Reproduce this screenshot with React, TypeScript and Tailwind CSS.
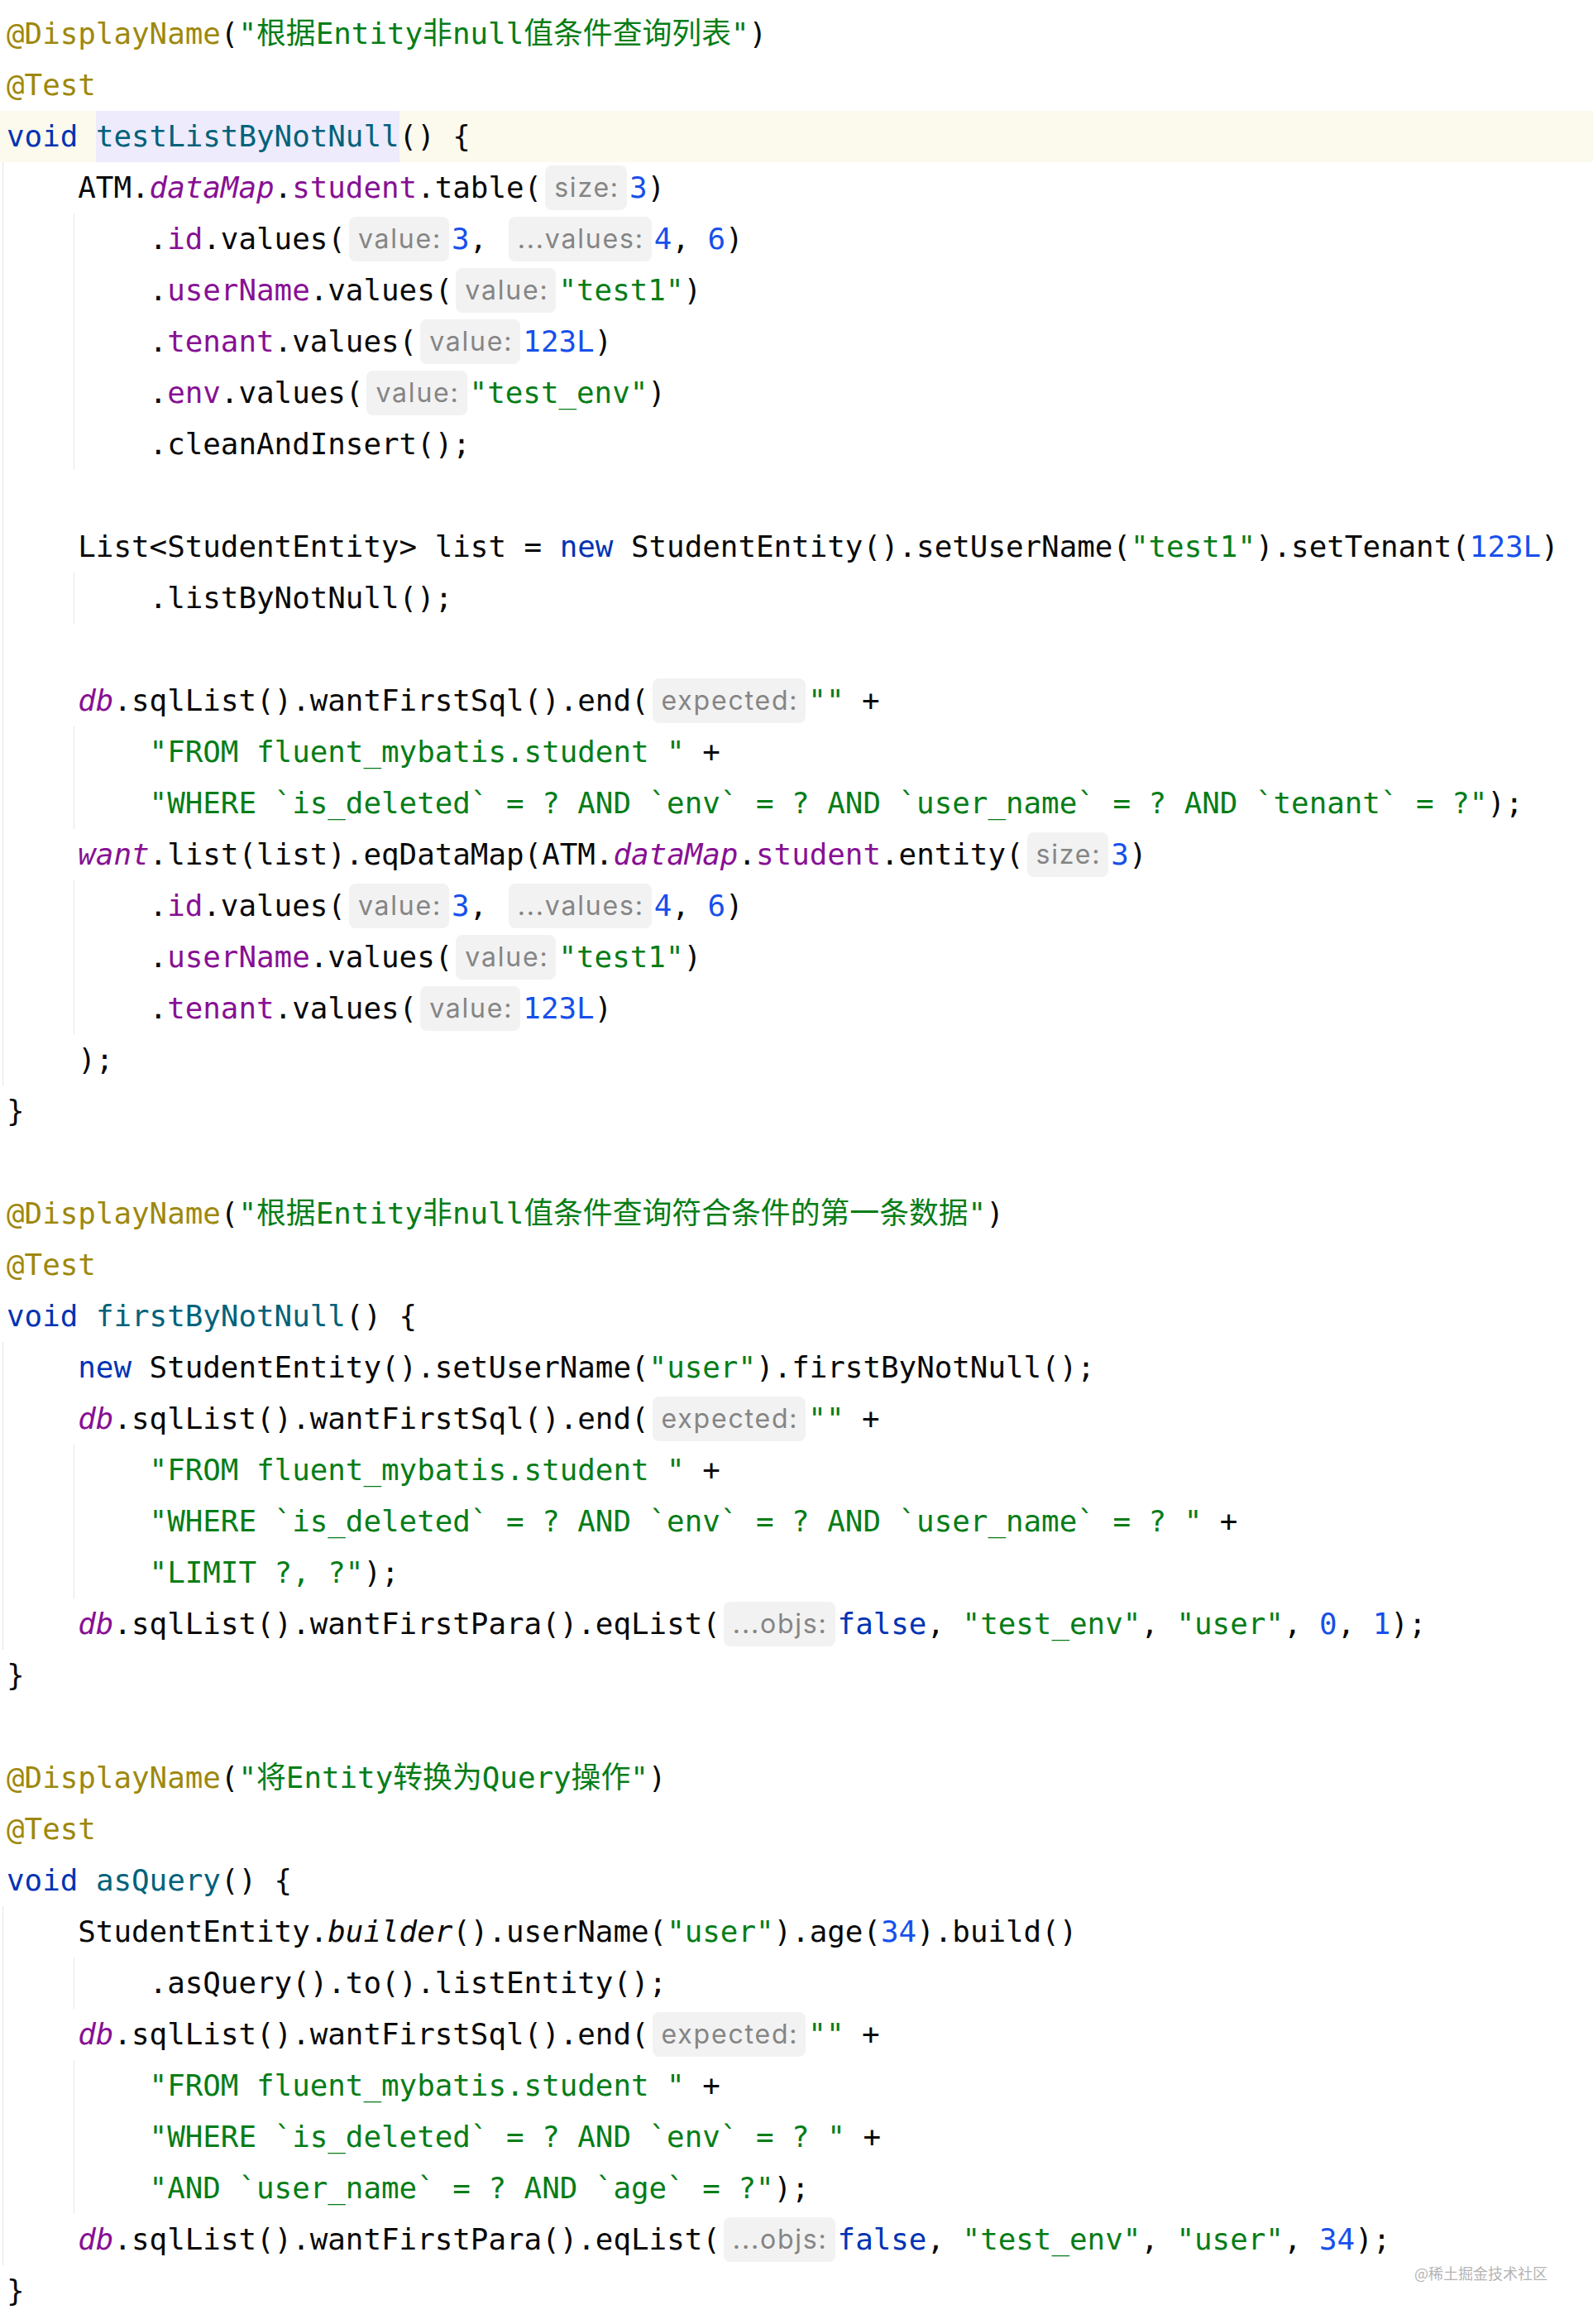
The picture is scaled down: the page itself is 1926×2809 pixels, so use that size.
import React from "react";

type Tok = [string, string];

const CLS: Record<string, string> = {
  t: "text-[#080808]",
  a: "text-[#9e880d]",
  s: "text-[#067d17]",
  k: "text-[#0033b3]",
  m: "text-[#00627a]",
  mh: "text-[#00627a] bg-[#edebfc] self-stretch flex items-center",
  f: "text-[#871094]",
  fi: "text-[#871094] italic",
  i: "text-[#080808] italic",
  n: "text-[#1750eb]",
};

const LINES: Tok[][] = [
  [["a", "@DisplayName"], ["t", "("], ["s", '"根据Entity非null值条件查询列表"'], ["t", ")"]],
  [["a", "@Test"]],
  [["k", "void"], ["t", " "], ["mh", "testListByNotNull"], ["t", "() {"]],
  [["t", "    ATM."], ["fi", "dataMap"], ["t", "."], ["f", "student"], ["t", ".table("], ["h", "size:"], ["n", "3"], ["t", ")"]],
  [["t", "        ."], ["f", "id"], ["t", ".values("], ["h", "value:"], ["n", "3"], ["t", ", "], ["h", "...values:"], ["n", "4"], ["t", ", "], ["n", "6"], ["t", ")"]],
  [["t", "        ."], ["f", "userName"], ["t", ".values("], ["h", "value:"], ["s", '"test1"'], ["t", ")"]],
  [["t", "        ."], ["f", "tenant"], ["t", ".values("], ["h", "value:"], ["n", "123L"], ["t", ")"]],
  [["t", "        ."], ["f", "env"], ["t", ".values("], ["h", "value:"], ["s", '"test_env"'], ["t", ")"]],
  [["t", "        .cleanAndInsert();"]],
  [],
  [["t", "    List<StudentEntity> list = "], ["k", "new"], ["t", " StudentEntity().setUserName("], ["s", '"test1"'], ["t", ").setTenant("], ["n", "123L"], ["t", ")"]],
  [["t", "        .listByNotNull();"]],
  [],
  [["t", "    "], ["fi", "db"], ["t", ".sqlList().wantFirstSql().end("], ["h", "expected:"], ["s", '""'], ["t", " +"]],
  [["t", "        "], ["s", '"FROM fluent_mybatis.student "'], ["t", " +"]],
  [["t", "        "], ["s", '"WHERE `is_deleted` = ? AND `env` = ? AND `user_name` = ? AND `tenant` = ?"'], ["t", ");"]],
  [["t", "    "], ["fi", "want"], ["t", ".list(list).eqDataMap(ATM."], ["fi", "dataMap"], ["t", "."], ["f", "student"], ["t", ".entity("], ["h", "size:"], ["n", "3"], ["t", ")"]],
  [["t", "        ."], ["f", "id"], ["t", ".values("], ["h", "value:"], ["n", "3"], ["t", ", "], ["h", "...values:"], ["n", "4"], ["t", ", "], ["n", "6"], ["t", ")"]],
  [["t", "        ."], ["f", "userName"], ["t", ".values("], ["h", "value:"], ["s", '"test1"'], ["t", ")"]],
  [["t", "        ."], ["f", "tenant"], ["t", ".values("], ["h", "value:"], ["n", "123L"], ["t", ")"]],
  [["t", "    );"]],
  [["t", "}"]],
  [],
  [["a", "@DisplayName"], ["t", "("], ["s", '"根据Entity非null值条件查询符合条件的第一条数据"'], ["t", ")"]],
  [["a", "@Test"]],
  [["k", "void"], ["t", " "], ["m", "firstByNotNull"], ["t", "() {"]],
  [["t", "    "], ["k", "new"], ["t", " StudentEntity().setUserName("], ["s", '"user"'], ["t", ").firstByNotNull();"]],
  [["t", "    "], ["fi", "db"], ["t", ".sqlList().wantFirstSql().end("], ["h", "expected:"], ["s", '""'], ["t", " +"]],
  [["t", "        "], ["s", '"FROM fluent_mybatis.student "'], ["t", " +"]],
  [["t", "        "], ["s", '"WHERE `is_deleted` = ? AND `env` = ? AND `user_name` = ? "'], ["t", " +"]],
  [["t", "        "], ["s", '"LIMIT ?, ?"'], ["t", ");"]],
  [["t", "    "], ["fi", "db"], ["t", ".sqlList().wantFirstPara().eqList("], ["h", "...objs:"], ["k", "false"], ["t", ", "], ["s", '"test_env"'], ["t", ", "], ["s", '"user"'], ["t", ", "], ["n", "0"], ["t", ", "], ["n", "1"], ["t", ");"]],
  [["t", "}"]],
  [],
  [["a", "@DisplayName"], ["t", "("], ["s", '"将Entity转换为Query操作"'], ["t", ")"]],
  [["a", "@Test"]],
  [["k", "void"], ["t", " "], ["m", "asQuery"], ["t", "() {"]],
  [["t", "    StudentEntity."], ["i", "builder"], ["t", "().userName("], ["s", '"user"'], ["t", ").age("], ["n", "34"], ["t", ").build()"]],
  [["t", "        .asQuery().to().listEntity();"]],
  [["t", "    "], ["fi", "db"], ["t", ".sqlList().wantFirstSql().end("], ["h", "expected:"], ["s", '""'], ["t", " +"]],
  [["t", "        "], ["s", '"FROM fluent_mybatis.student "'], ["t", " +"]],
  [["t", "        "], ["s", '"WHERE `is_deleted` = ? AND `env` = ? "'], ["t", " +"]],
  [["t", "        "], ["s", '"AND `user_name` = ? AND `age` = ?"'], ["t", ");"]],
  [["t", "    "], ["fi", "db"], ["t", ".sqlList().wantFirstPara().eqList("], ["h", "...objs:"], ["k", "false"], ["t", ", "], ["s", '"test_env"'], ["t", ", "], ["s", '"user"'], ["t", ", "], ["n", "34"], ["t", ");"]],
  [["t", "}"]],
];

function inRanges(n: number, ranges: [number, number][]) {
  return ranges.some(([a, b]) => n >= a && n <= b);
}

const G0: [number, number][] = [[4, 21], [27, 32], [38, 44]];
const G4: [number, number][] = [[5, 9], [12, 12], [15, 16], [18, 20], [29, 31], [39, 39], [41, 43]];

function Hint({ text }: { text: string }) {
  return (
    <span className="ml-[4px] mr-[3px] inline-flex h-[54px] items-center rounded-[8px] bg-[#f2f2f2] pl-[11px] pr-[9px] font-['Inter'] text-[32px] leading-[54px] tracking-[1.8px] text-[#858585]">
      {text}
    </span>
  );
}

function Line({ toks, n }: { toks: Tok[]; n: number }) {
  const current = n === 3;
  return (
    <div
      className={
        "relative flex h-[62px] items-center whitespace-pre pl-[8px] leading-[62px] " +
        (current ? "bg-[#fcfaed]" : "")
      }
    >
      {inRanges(n, G0) && <span className="absolute left-[3px] top-0 h-full w-[1px] bg-[#e6e6e6]" />}
      {inRanges(n, G4) && <span className="absolute left-[89px] top-0 h-full w-[1px] bg-[#e6e6e6]" />}
      {toks.map(([k, s], i) =>
        k === "h" ? <Hint key={i} text={s} /> : (
          <span key={i} className={CLS[k]}>
            {s}
          </span>
        )
      )}
    </div>
  );
}

export default function App() {
  return (
    <div className="relative h-[2809px] w-[1926px] overflow-hidden bg-white pt-[10px] font-[family-name:'DejaVu_Sans_Mono','Noto_Sans_CJK_SC',monospace] text-[35.85px] text-[#080808]">
      {LINES.map((toks, i) => (
        <Line key={i} toks={toks} n={i + 1} />
      ))}
      <div className="absolute bottom-[49px] right-[55px] font-['Noto_Sans_CJK_SC',sans-serif] text-[18px] leading-[26px] text-[#b4b4b4]">
        @稀土掘金技术社区
      </div>
    </div>
  );
}
